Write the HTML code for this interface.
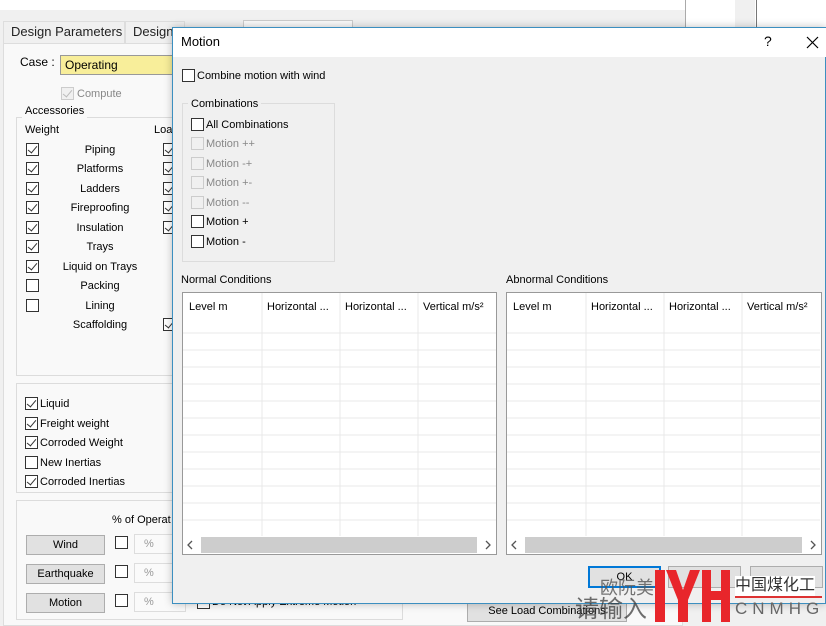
<!DOCTYPE html>
<html><head><meta charset="utf-8"><style>
*{box-sizing:border-box;margin:0;padding:0}
body{width:826px;height:626px;overflow:hidden;background:#f0f0f0;font-family:"Liberation Sans","Noto Sans CJK SC",sans-serif;font-size:11px;line-height:16px;color:#000;position:relative}
.a{position:absolute;white-space:nowrap}
.cb{position:absolute;width:13px;height:13px;border:1px solid #333;background:#fff}
.cb.c::after{content:"";position:absolute;left:3px;top:0px;width:4px;height:8px;border:solid #333;border-width:0 1px 1px 0;transform:rotate(40deg)}
.cb.d{border-color:#ccc;background:#f0f0f0}
.cb.d.c::after{border-color:#bbb}
.grp{position:absolute;border:1px solid #dcdcdc}
.btn{position:absolute;background:#e1e1e1;border:1px solid #adadad;text-align:center;line-height:18px}
.gl{color:#888}
</style></head><body>
<div class="a" style="left:0;top:0;width:685px;height:10px;background:#fff"></div>
<div class="a" style="left:685px;top:0;width:1px;height:30px;background:#aaa"></div>
<div class="a" style="left:686px;top:0;width:140px;height:27px;background:#fff"></div>
<div class="a" style="left:735px;top:0;width:20px;height:27px;background:#f0f0f0"></div>
<div class="a" style="left:756px;top:0;width:1px;height:27px;background:#777"></div>
<div class="a" style="left:3px;top:21px;width:122px;height:23px;border:1px solid #ddd;background:#f0f0f0;font-size:13px;padding:2px 0 0 7px;color:#222">Design Parameters</div>
<div class="a" style="left:125px;top:21px;width:60px;height:23px;border:1px solid #ddd;background:#f0f0f0;font-size:13px;padding:2px 0 0 7px;color:#222">Design</div>
<div class="a" style="left:243px;top:20px;width:110px;height:10px;border:1px solid #ccc;background:#fafafa"></div>
<div class="a" style="left:3px;top:43px;width:680px;height:583px;background:#f9f9f9;border:1px solid #ddd"></div>
<div class="a" style="left:20px;top:54px;font-size:12px">Case :</div>
<div class="a" style="left:60px;top:55px;width:115px;height:20px;border:1px solid #999;background:#f8ee9a;padding:1px 0 0 4px;font-size:12px">Operating</div>
<div class="cb d c" style="left:61px;top:87px"></div><div class="a gl" style="left:77px;top:86px;font-size:11px">Compute</div>
<div class="grp" style="left:16px;top:117px;width:160px;height:259px"></div>
<div class="a" style="left:22px;top:103px;background:#f9f9f9;padding:0 3px">Accessories</div>
<div class="a" style="left:25px;top:122px">Weight</div><div class="a" style="left:154px;top:122px">Loa</div>
<div class="cb c" style="left:26px;top:143px"></div><div class="a" style="left:100px;top:142px;transform:translateX(-50%)">Piping</div><div class="cb c" style="left:163px;top:143px"></div>
<div class="cb c" style="left:26px;top:162px"></div><div class="a" style="left:100px;top:161px;transform:translateX(-50%)">Platforms</div><div class="cb c" style="left:163px;top:162px"></div>
<div class="cb c" style="left:26px;top:182px"></div><div class="a" style="left:100px;top:181px;transform:translateX(-50%)">Ladders</div><div class="cb c" style="left:163px;top:182px"></div>
<div class="cb c" style="left:26px;top:201px"></div><div class="a" style="left:100px;top:200px;transform:translateX(-50%)">Fireproofing</div><div class="cb c" style="left:163px;top:201px"></div>
<div class="cb c" style="left:26px;top:221px"></div><div class="a" style="left:100px;top:220px;transform:translateX(-50%)">Insulation</div><div class="cb c" style="left:163px;top:221px"></div>
<div class="cb c" style="left:26px;top:240px"></div><div class="a" style="left:100px;top:239px;transform:translateX(-50%)">Trays</div>
<div class="cb c" style="left:26px;top:260px"></div><div class="a" style="left:100px;top:259px;transform:translateX(-50%)">Liquid on Trays</div>
<div class="cb" style="left:26px;top:279px"></div><div class="a" style="left:100px;top:278px;transform:translateX(-50%)">Packing</div>
<div class="cb" style="left:26px;top:299px"></div><div class="a" style="left:100px;top:298px;transform:translateX(-50%)">Lining</div>
<div class="a" style="left:100px;top:317px;transform:translateX(-50%)">Scaffolding</div><div class="cb c" style="left:163px;top:318px"></div>
<div class="grp" style="left:16px;top:383px;width:160px;height:110px"></div>
<div class="cb c" style="left:25px;top:397px"></div><div class="a" style="left:40px;top:396px">Liquid</div>
<div class="cb c" style="left:25px;top:417px"></div><div class="a" style="left:40px;top:416px">Freight weight</div>
<div class="cb c" style="left:25px;top:436px"></div><div class="a" style="left:40px;top:435px">Corroded Weight</div>
<div class="cb" style="left:25px;top:456px"></div><div class="a" style="left:40px;top:455px">New Inertias</div>
<div class="cb c" style="left:25px;top:475px"></div><div class="a" style="left:40px;top:474px">Corroded Inertias</div>
<div class="grp" style="left:16px;top:500px;width:387px;height:120px"></div>
<div class="a" style="left:112px;top:512px">% of Operat</div>
<div class="btn" style="left:26px;top:535px;width:79px;height:20px">Wind</div><div class="cb" style="left:115px;top:536px"></div><div class="a" style="left:134px;top:534px;width:52px;height:20px;border:1px solid #ddd;background:#fafafa;color:#999;padding:1px 0 0 9px">%</div>
<div class="btn" style="left:26px;top:564px;width:79px;height:20px">Earthquake</div><div class="cb" style="left:115px;top:565px"></div><div class="a" style="left:134px;top:563px;width:52px;height:20px;border:1px solid #ddd;background:#fafafa;color:#999;padding:1px 0 0 9px">%</div>
<div class="btn" style="left:26px;top:593px;width:79px;height:20px">Motion</div><div class="cb" style="left:115px;top:594px"></div><div class="a" style="left:134px;top:592px;width:52px;height:20px;border:1px solid #ddd;background:#fafafa;color:#999;padding:1px 0 0 9px">%</div>
<div class="cb" style="left:197px;top:596px"></div><div class="a" style="left:212px;top:594px">Do Not Apply Extreme Motion</div>
<div class="btn" style="left:467px;top:600px;width:160px;height:22px;line-height:20px">See Load Combinations</div>

<div class="a" style="left:172px;top:27px;width:654px;height:577px;background:#f0f0f0;border:1px solid #3c8fc0;box-shadow:0 0 8px rgba(0,0,0,.25)"></div>
<div class="a" style="left:173px;top:28px;width:653px;height:29px;background:#fff"></div>
<div class="a" style="left:181px;top:34px;font-size:13px">Motion</div>
<div class="a" style="left:764px;top:33px;font-size:14px">?</div>
<svg class="a" style="left:806px;top:36px" width="13" height="13"><path d="M1 1L12 12M12 1L1 12" stroke="#000" stroke-width="1.2"/></svg>
<div class="cb" style="left:182px;top:69px"></div><div class="a" style="left:197px;top:68px">Combine motion with wind</div>
<div class="grp" style="left:182px;top:103px;width:153px;height:159px"></div>
<div class="a" style="left:188px;top:96px;background:#f0f0f0;padding:0 3px">Combinations</div>
<div class="cb" style="left:191px;top:118px"></div><div class="a" style="left:206px;top:117px">All Combinations</div>
<div class="cb d" style="left:191px;top:137px"></div><div class="a gl" style="left:206px;top:136px">Motion ++</div>
<div class="cb d" style="left:191px;top:157px"></div><div class="a gl" style="left:206px;top:156px">Motion -+</div>
<div class="cb d" style="left:191px;top:176px"></div><div class="a gl" style="left:206px;top:175px">Motion +-</div>
<div class="cb d" style="left:191px;top:196px"></div><div class="a gl" style="left:206px;top:195px">Motion --</div>
<div class="cb" style="left:191px;top:215px"></div><div class="a" style="left:206px;top:214px">Motion +</div>
<div class="cb" style="left:191px;top:235px"></div><div class="a" style="left:206px;top:234px">Motion -</div>

<div class="a" style="left:181px;top:272px">Normal Conditions</div>
<div class="a" style="left:506px;top:272px">Abnormal Conditions</div>
<svg class="a" style="left:182px;top:292px" width="316" height="264">
<rect x="0.5" y="0.5" width="314" height="262" fill="#fff" stroke="#999"/>
<g stroke="#e8e8e8"><path d="M80 1V244M158 1V244M236 1V244M1 41H314M1 58H314M1 75H314M1 92H314M1 109H314M1 126H314M1 143H314M1 160H314M1 177H314M1 194H314M1 211H314M1 228H314"/></g>
<rect x="19" y="245" width="276" height="16" fill="#cdcdcd"/>
<path d="M10 249L6 253L10 257M304 249L308 253L304 257" stroke="#555" fill="none" stroke-width="1.3"/>
<g font-family="Liberation Sans" font-size="11"><text x="7" y="18">Level m</text><text x="85" y="18">Horizontal ...</text><text x="163" y="18">Horizontal ...</text><text x="241" y="18">Vertical m/s²</text></g>
</svg>
<svg class="a" style="left:506px;top:292px" width="317" height="264">
<rect x="0.5" y="0.5" width="315" height="262" fill="#fff" stroke="#999"/>
<g stroke="#e8e8e8"><path d="M80 1V244M158 1V244M236 1V244M1 41H314M1 58H314M1 75H314M1 92H314M1 109H314M1 126H314M1 143H314M1 160H314M1 177H314M1 194H314M1 211H314M1 228H314"/></g>
<rect x="19" y="245" width="277" height="16" fill="#cdcdcd"/>
<path d="M10 249L6 253L10 257M305 249L309 253L305 257" stroke="#555" fill="none" stroke-width="1.3"/>
<g font-family="Liberation Sans" font-size="11"><text x="7" y="18">Level m</text><text x="85" y="18">Horizontal ...</text><text x="163" y="18">Horizontal ...</text><text x="241" y="18">Vertical m/s²</text></g>
</svg>
<div class="btn" style="left:588px;top:566px;width:73px;height:22px;border:2px solid #0078d7;line-height:18px">OK</div>
<div class="btn" style="left:668px;top:566px;width:73px;height:22px"></div>
<div class="btn" style="left:750px;top:566px;width:73px;height:22px"></div>
<div class="a" style="left:600px;top:578px;font-size:18px;line-height:20px;color:#555;opacity:.8">欧阮美</div>
<div class="a" style="left:575px;top:596px;font-size:24px;line-height:28px;color:#333;opacity:.7">请输入</div>
<div class="a" style="left:655px;top:570px;width:10px;height:52px;background:#e8262b"></div>
<svg class="a" style="left:666px;top:570px" width="64" height="52"><path d="M0 0H10L17 20L24 0H34L22 30V52H12V30Z M36 0H45V21H55V0H64V52H55V30H45V52H36Z" fill="#e8262b"/></svg>
<div class="a" style="left:735px;top:576px;font-size:16px;line-height:20px;color:#333;background:#fff">中国煤化工</div>
<div class="a" style="left:735px;top:596px;width:87px;height:2px;background:#d33"></div>
<div class="a" style="left:735px;top:599px;font-size:17px;line-height:20px;color:#666;letter-spacing:5px">CNMHG</div>
</body></html>
